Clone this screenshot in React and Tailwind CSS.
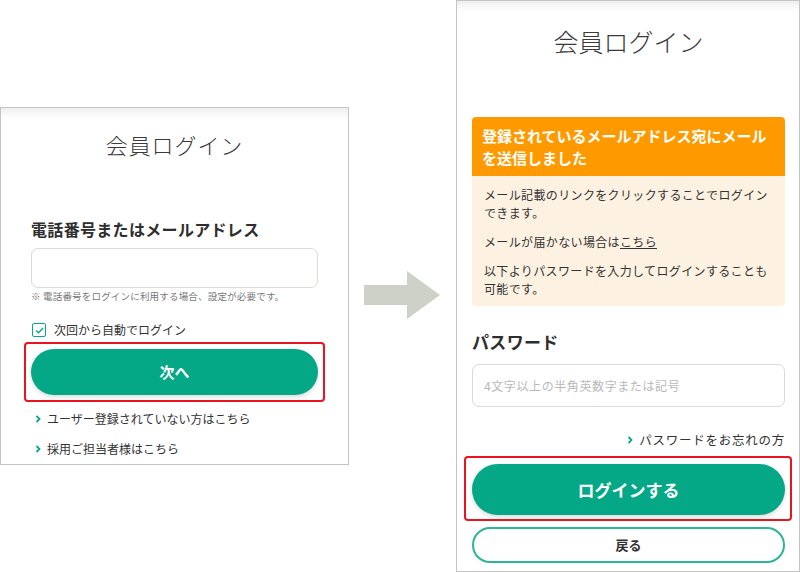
const font = { fontFamily: '"Noto Sans CJK JP", "Noto Sans", sans-serif' };

function Chevron() {
  return (
    <svg width="6" height="8" viewBox="0 0 6 8" className="shrink-0">
      <path d="M1.5 1 L4.5 4 L1.5 7" fill="none" stroke="#08a888" strokeWidth="1.8" />
    </svg>
  );
}

function LeftPanel() {
  return (
    <div className="relative mt-[107px] h-[358px] w-[349px] shrink-0 border border-[#c4c4c4] bg-white px-[30px] pt-[21px] shadow-[inset_0_10px_10px_-6px_rgba(0,0,0,0.08)]">
      <h1 className="text-center text-[22px] leading-[30px] font-light tracking-[0.04em] text-[#3a3a3a]">会員ログイン</h1>
      <p className="mt-[58px] text-[16px] leading-[24px] font-bold tracking-[0.02em] text-[#2e2e2e]">電話番号またはメールアドレス</p>
      <div className="mt-[7px] h-[40px] rounded-[7px] border border-[#dcdad4] bg-white" />
      <p className="mt-[1px] text-[9.5px] leading-[14px] tracking-[0.02em] text-[#777]">※ 電話番号をログインに利用する場合、設定が必要です。</p>
      <div className="mt-[19px] flex h-[16px] items-center gap-[8px] pl-[1px]">
        <span className="flex h-[14px] w-[14px] items-center justify-center rounded-[2px] border-[1.5px] border-[#08a888]">
          <svg width="9" height="7" viewBox="0 0 9 7">
            <path d="M1 3.5 L3.5 5.8 L8 1" fill="none" stroke="#08a888" strokeWidth="1.4" />
          </svg>
        </span>
        <span className="text-[12px] leading-[16px] text-[#333]">次回から自動でログイン</span>
      </div>
      <div className="relative mt-[11px]">
        <span className="pointer-events-none absolute -top-[7px] -bottom-[7px] -left-[7px] -right-[7px] rounded-[4px] border-[2.5px] border-[#e8141e]" />
        <button className="flex h-[46px] w-full items-center justify-center rounded-full bg-[#04a886] text-[15px] font-bold text-white shadow-[0_2px_4px_rgba(0,0,0,0.15)]">
          次へ
        </button>
      </div>
      <div className="mt-[15px] flex h-[18px] items-center gap-[6px] pl-[4px] text-[12px] leading-[18px] text-[#333]">
        <Chevron />
        <span>ユーザー登録されていない方はこちら</span>
      </div>
      <div className="mt-[12px] flex h-[18px] items-center gap-[6px] pl-[4px] text-[12px] leading-[18px] text-[#333]">
        <Chevron />
        <span>採用ご担当者様はこちら</span>
      </div>
    </div>
  );
}

function Arrow() {
  return (
    <div className="ml-[15px] mt-[271px] shrink-0">
      <svg width="76" height="48" viewBox="0 0 76 48">
        <polygon points="0,14 43,14 43,0 76,24 43,48 43,34 0,34" fill="#cdd1c7" />
      </svg>
    </div>
  );
}

function RightPanel() {
  return (
    <div className="ml-[16px] h-[572px] w-[344px] shrink-0 border border-[#c4c4c4] bg-white pl-[15px] pr-[14px] pt-[23px] shadow-[inset_0_10px_10px_-6px_rgba(0,0,0,0.08)]">
      <h1 className="text-center text-[25px] leading-[34px] font-light text-[#3a3a3a]">会員ログイン</h1>
      <div className="mt-[59px] rounded-[4px] overflow-hidden">
        <div className="bg-[#fe9a00] pl-[10px] pr-[8px] pt-[8px] pb-[7px] text-[15px] leading-[22px] font-bold text-white">
          登録されているメールアドレス宛にメールを送信しました
        </div>
        <div className="bg-[#fdf2e2] pl-[12px] pr-[10px] pt-[10px] pb-[8px] text-[12px] leading-[18px] tracking-[0.03em] text-[#333]">
          <p>メール記載のリンクをクリックすることでログインできます。</p>
          <p className="mt-[11px]">
            メールが届かない場合は<span className="underline">こちら</span>
          </p>
          <p className="mt-[11px]">以下よりパスワードを入力してログインすることも可能です。</p>
        </div>
      </div>
      <p className="mt-[24px] text-[17px] leading-[24px] font-bold tracking-[0.02em] text-[#2e2e2e]">パスワード</p>
      <div className="mt-[10px] flex h-[43px] items-center rounded-[7px] border border-[#dcdad4] bg-white px-[11px] text-[12px] tracking-[0.05em] text-[#b9b9b9]">
        4文字以上の半角英数字または記号
      </div>
      <div className="mt-[24px] flex h-[18px] items-center justify-end gap-[6px] text-[12.5px] leading-[18px] tracking-[0.06em] text-[#333]">
        <Chevron />
        <span>パスワードをお忘れの方</span>
      </div>
      <div className="relative mt-[15px]">
        <span className="pointer-events-none absolute -top-[8px] -bottom-[6px] -left-[8px] -right-[7px] rounded-[4px] border-[2.5px] border-[#e8141e]" />
        <button className="flex h-[51px] w-full items-center justify-center rounded-full bg-[#04a886] text-[17px] font-bold text-white shadow-[0_2px_4px_rgba(0,0,0,0.15)]">
          ログインする
        </button>
      </div>
      <button className="mt-[12px] flex h-[36px] w-full items-center justify-center rounded-full border-2 border-[#2db594] bg-white text-[13px] font-bold text-[#333]">
        戻る
      </button>
    </div>
  );
}

export default function App() {
  return (
    <div className="flex h-[572px] w-[800px] items-start overflow-hidden bg-white" style={font}>
      <LeftPanel />
      <Arrow />
      <RightPanel />
    </div>
  );
}
